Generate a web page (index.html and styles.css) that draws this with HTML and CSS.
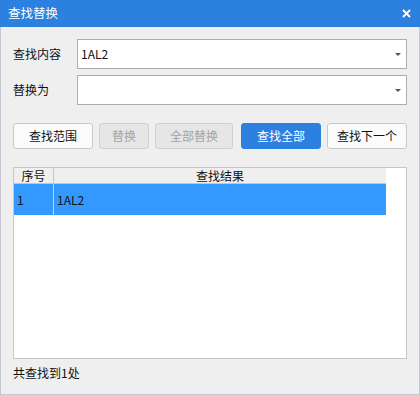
FILE: index.html
```html
<!DOCTYPE html>
<html lang="zh-CN">
<head>
<meta charset="utf-8">
<title>查找替换</title>
<link rel="stylesheet" href="styles.css">
</head>
<body>
<div class="window">
  <div class="titlebar">
    <span class="title">查找替换</span>
    <svg class="close" width="9" height="9" viewBox="0 0 9 9"><path d="M1 1 L8 8 M8 1 L1 8" stroke="#fff" stroke-width="1.8" fill="none"/></svg>
  </div>
  <div class="content">
    <div class="form">
      <label class="label">查找内容</label>
      <div class="combo"><span class="value">1AL2</span><span class="arrow"></span></div>
      <label class="label">替换为</label>
      <div class="combo"><span class="value"></span><span class="arrow"></span></div>
    </div>
    <div class="buttons">
      <button class="btn w80">查找范围</button>
      <button class="btn w50 disabled">替换</button>
      <button class="btn w78 disabled gap8">全部替换</button>
      <button class="btn w80 primary">查找全部</button>
      <button class="btn w80">查找下一个</button>
    </div>
    <div class="table">
      <div class="thead">
        <div class="th c1">序号</div>
        <div class="th c2">查找结果</div>
      </div>
      <div class="tr selected">
        <div class="td c1">1</div>
        <div class="td c2">1AL2</div>
      </div>
    </div>
    <div class="status">共查找到1处</div>
  </div>
</div>
</body>
</html>
```

FILE: styles.css
```css
* { box-sizing: border-box; }
html, body { margin: 0; padding: 0; background: #efefef; }
body { font-family: "Noto Sans CJK SC", "Noto Sans", sans-serif; font-size: 12px; color: #111; }

.window {
  width: 420px;
  height: 395px;
  background: #efefef;
  border: 1px solid #c3c8d2;
  border-top: none;
  display: flex;
  flex-direction: column;
}

.titlebar {
  height: 27px;
  margin: 0 -1px;
  background: #2b80e0;
  color: #fff;
  display: flex;
  align-items: center;
  justify-content: space-between;
  padding: 0 9px 0 8px;
}
.title { font-size: 12.5px; letter-spacing: 0; line-height: 1; }
.close { display: block; }

.content {
  padding: 12px 12px 0 12px;
  display: flex;
  flex-direction: column;
}

.form {
  display: grid;
  grid-template-columns: 64px 330px;
  row-gap: 6px;
  align-items: center;
}
.label { line-height: 1; }
.combo {
  height: 30px;
  background: #fff;
  border: 1px solid #acacac;
  display: flex;
  align-items: center;
  justify-content: space-between;
  padding: 0 5px 0 3px;
}
.value { line-height: 1; }
.arrow {
  width: 0; height: 0;
  border-left: 3px solid transparent;
  border-right: 3px solid transparent;
  border-top: 3px solid #555;
}

.buttons {
  display: flex;
  gap: 6px;
  margin-top: 18px;
}
.btn {
  height: 26px;
  font: inherit;
  font-size: 12px;
  color: #111;
  background: #fbfbfb;
  border: 1px solid #c9c9c9;
  border-radius: 3px;
  padding: 0;
  line-height: 1;
}
.w80 { width: 80px; }
.w50 { width: 50px; }
.w78 { width: 78px; }
.gap8 { margin-right: 2px; }
.btn.disabled { background: #e6e6e6; color: #a3a3a3; border-color: #cfcfcf; }
.btn.primary { background: #2b80e0; border-color: #2b80e0; color: #fff; }

.table {
  margin-top: 18px;
  width: 394px;
  height: 192px;
  background: #fff;
  border: 1px solid #c6c6c6;
}
.thead {
  display: flex;
  width: 372px;
  height: 16px;
  background: #efefef;
  border-bottom: 1px solid #c6c6c6;
}
.th {
  text-align: center;
  line-height: 16px;
  height: 16px;
}
.c1 { width: 40px; border-right: 1px solid #c6c6c6; }
.c2 { flex: 1; }
.tr {
  display: flex;
  width: 372px;
  height: 31px;
}
.tr.selected { background: #3399ff; color: #111; }
.td {
  line-height: 31px;
  padding-left: 3px;
}
.td.c1 { border-right-color: #d0d0d0; }

.status {
  margin-top: 7px;
  line-height: 14px;
}
```
